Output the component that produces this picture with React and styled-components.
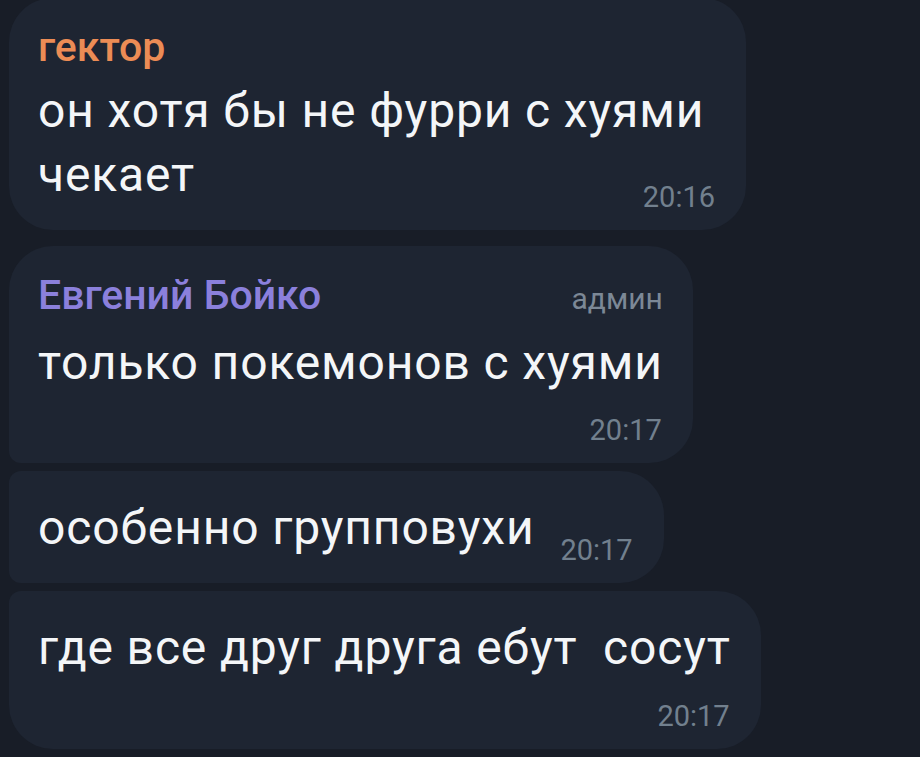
import React from 'react';
import styled, { createGlobalStyle } from 'styled-components';

const GlobalStyle = createGlobalStyle`
  html, body {
    margin: 0;
    padding: 0;
    background: #181d27;
    font-family: Roboto, "Noto Sans", "Liberation Sans", sans-serif;
  }
`;

const Chat = styled.div`
  width: 920px;
  height: 757px;
  overflow: hidden;
  background: #181d27;
  display: flex;
  flex-direction: column;
  align-items: flex-start;
  padding-left: 9px;
  box-sizing: border-box;
`;

const big = '44px';
const small = '12px';

const Bubble = styled.div`
  box-sizing: border-box;
  max-width: 790px;
  width: ${(p) => (p.$width ? `${p.$width}px` : 'auto')};
  background: #1e2532;
  padding: 25px 30px 15px 29px;
  margin-top: ${(p) => p.$gap}px;
  border-radius: ${(p) => (p.$first ? big : small)} ${big} ${big} ${(p) => (p.$last ? big : small)};
  display: flex;
  flex-direction: column;
`;

const Header = styled.div`
  display: flex;
  justify-content: space-between;
  align-items: baseline;
  gap: 40px;
  margin-bottom: 8px;
`;

const Name = styled.span`
  font-size: 41px;
  line-height: 48px;
  font-weight: 500;
  color: ${(p) => p.$color};
`;

const Role = styled.span`
  font-size: 30px;
  line-height: 48px;
  color: #7c8896;
`;

const Row = styled.div`
  display: flex;
  align-items: flex-start;
  gap: 26px;
`;

const Text = styled.div`
  font-size: 48px;
  line-height: 64px;
  letter-spacing: 0.85px;
  color: #f4f6f8;
  white-space: pre-wrap;
`;

const Footer = styled.div`
  display: flex;
  justify-content: flex-end;
  margin-top: ${(p) => p.$offset}px;
`;

const Time = styled.span`
  font-size: 29px;
  line-height: 36px;
  color: #72808e;
  margin-top: ${(p) => p.$drop || 0}px;
  margin-right: 1px;
`;

const messages = [
  {
    name: 'гектор',
    color: '#ec8c55',
    text: 'он хотя бы не фурри с хуями чекает',
    time: '20:16',
    first: true,
    last: true,
    width: 737,
    gap: -2,
    offset: -28,
  },
  {
    name: 'Евгений Бойко',
    color: '#8b80dc',
    role: 'админ',
    text: 'только покемонов с хуями',
    time: '20:17',
    first: true,
    gap: 16,
    offset: 17,
  },
  {
    text: 'особенно групповухи',
    time: '20:17',
    inline: true,
    gap: 8,
  },
  {
    text: 'где все друг друга ебут  сосут',
    time: '20:17',
    last: true,
    gap: 8,
    offset: 18,
  },
];

export default function App() {
  return (
    <>
      <GlobalStyle />
      <Chat>
        {messages.map((m, i) => (
          <Bubble key={i} $first={m.first} $last={m.last} $gap={m.gap} $width={m.width}>
            {m.name && (
              <Header>
                <Name $color={m.color}>{m.name}</Name>
                {m.role && <Role>{m.role}</Role>}
              </Header>
            )}
            {m.inline ? (
              <Row>
                <Text>{m.text}</Text>
                <Time $drop={36}>{m.time}</Time>
              </Row>
            ) : (
              <>
                <Text>{m.text}</Text>
                <Footer $offset={m.offset}>
                  <Time>{m.time}</Time>
                </Footer>
              </>
            )}
          </Bubble>
        ))}
      </Chat>
    </>
  );
}
